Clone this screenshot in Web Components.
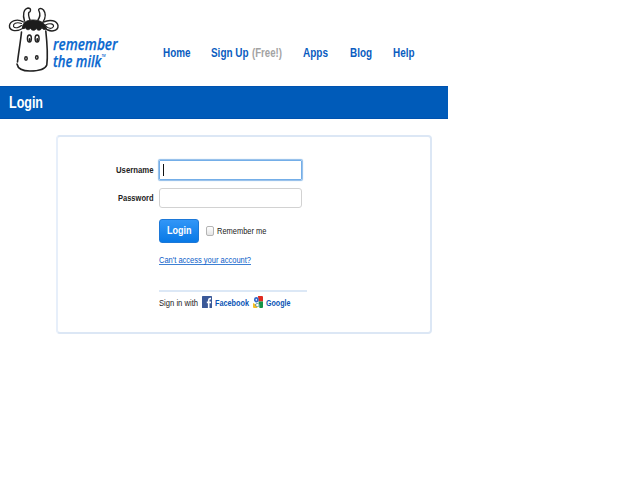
<!DOCTYPE html>
<html lang="en">
<head>
<meta charset="utf-8">
<title>Remember The Milk - Login</title>
<style>
body { margin: 0; background: #fff; font-family: "Liberation Sans", Arial, sans-serif; color: #222; }
</style>
</head>
<body>
<login-page></login-page>
<script>
const define = (name, html, setup) => customElements.define(name, class extends HTMLElement {
  connectedCallback() {
    if (this.shadowRoot) return;
    this.attachShadow({ mode: 'open' }).innerHTML = html;
    if (setup) setup(this, this.shadowRoot);
  }
});

/* One line of text condensed to a set width: w, size, h (line box) and base (baseline). */
define('fit-text', `<style>
  :host { display: block; flex: none; }
  svg { display: block; overflow: visible; }
  text { fill: currentColor; font-family: inherit; font-weight: inherit; font-style: inherit; }
</style><svg><text x="0" lengthAdjust="spacingAndGlyphs"></text></svg>`, (host, root) => {
  const svg = root.querySelector('svg'), t = root.querySelector('text');
  svg.setAttribute('width', host.getAttribute('w'));
  svg.setAttribute('height', host.getAttribute('h'));
  t.setAttribute('y', host.getAttribute('base'));
  t.setAttribute('font-size', host.getAttribute('size'));
  t.setAttribute('textLength', host.getAttribute('w'));
  t.textContent = host.getAttribute('text');
});

define('milk-logo', `<style>
  :host { display: block; width: 124px; height: 80px; }
  svg { display: block; overflow: visible; }
  text { font-family: "Open Sans", "Noto Sans", sans-serif; font-style: italic; font-weight: 600; font-size: 17px; fill: #0a68cf; stroke: #0a68cf; stroke-width: .25px; }
</style>
<svg width="124" height="80" viewBox="0 0 124 80" fill="none" stroke="#222" stroke-width="1.4" stroke-linecap="round" stroke-linejoin="round">
  <path d="M23.500 22C17 18 10 21 9.500 25.500C9 30 15 33 23.500 28"/>
  <path d="M21.500 23.500C16 21.500 13 24 13.500 26.500C15 29 19 27.500 21.500 25.500" stroke-width="1.1"/>
  <path d="M43.500 22C50 19 57 20.500 58 25.500C58.500 31.500 50 33 44 27.500"/>
  <path d="M45.500 25C50 22.500 54 24 53.500 26.500C52 29.500 48 28.500 46 26" stroke-width="1.1"/>
  <path d="M24.500 21C22.500 15 23.500 9 28 8C31.500 8 31 12 28.800 12.500C28 15 28.800 17 30 20"/>
  <path d="M38 20C40 17 40.500 14 39 11C37.500 8.500 41 7.500 43.500 10C46.500 14 45.500 18 43 22"/>
  <path d="M22.500 27.500C22.500 23 26 20 33 20C40 20 45.500 23 46.500 28.500C44.500 30.300 42.500 29.500 42 27.500C41 30.800 37.500 31 36.300 28.500C35 31 31.500 30.800 30.500 28.300C29 30.500 26 30 25.500 27.500C24.500 29 23 29 22.500 27.500Z" fill="#1c1c1c" stroke="#1c1c1c" stroke-width=".9"/>
  <path d="M21.500 32C20.500 42 18.500 53 17.500 62" stroke-width="1.6"/>
  <path d="M17 64C18 69.500 23 71 30 71C38 71 45 70 46.800 65C48 55 47 42 45.800 31" stroke-width="1.6"/>
  <ellipse cx="29.400" cy="38.500" rx="2" ry="3.500"/>
  <ellipse cx="37.100" cy="38.500" rx="2" ry="3.500"/>
  <path d="M29.600 39V40.700M37.300 39V40.700" stroke-width="1.9"/>
  <ellipse cx="26" cy="58.500" rx="1.200" ry="1.700" stroke-width="1.500"/>
  <ellipse cx="36.800" cy="57.500" rx="1.200" ry="1.700" stroke-width="1.500"/>
  <g stroke="none">
    <text x="53" y="49.500" textLength="64.500" lengthAdjust="spacingAndGlyphs">remember</text>
    <text x="53" y="66.500" textLength="48.500" lengthAdjust="spacingAndGlyphs">the milk</text>
    <text x="101.500" y="57" style="font-size:3px;stroke:none">TM</text>
  </g>
</svg>`);

define('site-header', `<style>
  :host { display: flex; height: 86px; width: 448px; color: #0a5cc0; font-weight: bold; }
  nav { display: flex; padding: 44px 0 0 38.500px; height: 18px; gap: 21.400px; }
  .pair { display: flex; gap: 3px; }
  .free { color: #a3a3a3; }
</style>
<milk-logo></milk-logo>
<nav>
  <fit-text w="27.500" h="18" base="12.600" size="12" text="Home"></fit-text>
  <span class="pair"><fit-text w="37.500" h="18" base="12.600" size="12" text="Sign Up"></fit-text><fit-text class="free" w="30" h="18" base="12.600" size="12" text="(Free!)"></fit-text></span>
  <fit-text w="25" h="18" base="12.600" size="12" text="Apps"></fit-text>
  <fit-text w="22" h="18" base="12.600" size="12" text="Blog"></fit-text>
  <fit-text w="21.500" h="18" base="12.600" size="12" text="Help"></fit-text>
</nav>`);

define('title-bar', `<style>
  :host { display: block; box-sizing: border-box; width: 448px; height: 33px; padding-left: 9px; background: #005bb9; border-top: 1px solid #0052ae; border-bottom: 1px solid #0052ae; color: #fff; font-weight: bold; }
</style><fit-text w="34" h="31" base="21" size="16" text="Login"></fit-text>`);

define('text-field', `<style>
  :host { display: grid; grid-template-columns: 95.500px 143px; column-gap: 5.500px; height: 21px; font-weight: bold; }
  fit-text { justify-self: end; }
  .box { box-sizing: border-box; height: 20px; border: 1px solid #d2d2d2; border-radius: 3px; padding: 3px 2.500px; }
  :host([focused]) .box { border-color: #74aee8; border-radius: 1px; box-shadow: 0 0 1px 1px #8fbce9; }
  :host([focused]) .box::before { content: ""; display: block; width: 1.200px; height: 12px; background: #111; }
</style><fit-text></fit-text><div class="box"></div>`, (host, root) => {
  const label = document.createElement('fit-text');
  for (const [k, v] of Object.entries({ w: host.getAttribute('w'), h: 20, base: 12.6, size: 9.5, text: host.getAttribute('label') })) label.setAttribute(k, v);
  root.querySelector('fit-text').replaceWith(label);
});

define('login-button', `<style>
  :host { display: block; box-sizing: border-box; width: 40px; height: 24px; padding-left: 7px; border: 1px solid #1c78d8; border-radius: 3px; background: linear-gradient(#3296f7, #0879e6); color: #fff; font-weight: bold; }
</style><fit-text w="24.500" h="22" base="14.300" size="11.500" text="Login"></fit-text>`);

define('check-option', `<style>
  :host { display: flex; gap: 3px; padding-top: 7px; }
  .box { box-sizing: border-box; width: 7.500px; height: 10px; border: 1px solid #b4b4b4; border-radius: 2px; background: linear-gradient(#fff, #e4e4e4); }
</style><div class="box"></div><fit-text w="49.500" h="12" base="8.300" size="9.500" text="Remember me"></fit-text>`);

define('facebook-icon', `<style>:host, svg { display: block; }</style>
<svg width="10" height="12" viewBox="0 0 10 12"><rect width="10" height="12" rx=".6" fill="#3b5998"/><path d="M9 2.600H8C7 2.600 6.700 3.200 6.700 4.300V12M4.800 6.400H9" fill="none" stroke="#fff" stroke-width="1.600"/></svg>`);

define('google-icon', `<style>:host, svg { display: block; }</style>
<svg width="10" height="12" viewBox="0 0 10 12">
  <rect width="10" height="12" rx="1" fill="#fff"/>
  <path d="M5 0H9Q10 0 10 1V5.500H5.500Z" fill="#e02b20"/><path d="M5.500 5.500H10V11Q10 12 9 12H6.500Z" fill="#159447"/>
  <path d="M0 7L3 8.500L4.500 12H1Q0 12 0 11Z" fill="#f6bd25"/>
  <ellipse cx="3.300" cy="3.700" rx="1.500" ry="1.900" fill="#fff" stroke="#3269c9" stroke-width="1.700"/>
  <ellipse cx="4.400" cy="9" rx="2" ry="1.500" fill="#fff" stroke="#4f8d8a" stroke-width=".8"/>
</svg>`);

define('sign-in-with', `<style>
  :host { display: flex; box-sizing: border-box; width: 148px; border-top: 2px solid #dce8f6; padding-top: 4px; color: #0a55b5; font-weight: bold; }
  .lead { color: #222; font-weight: normal; margin-right: 4px; }
  facebook-icon, google-icon { margin-right: 3px; }
  .fb { margin-right: 3.500px; }
</style>
<fit-text class="lead" w="39" h="14" base="9.600" size="9.500" text="Sign in with"></fit-text>
<facebook-icon></facebook-icon><fit-text class="fb" w="34" h="14" base="9.600" size="9.500" text="Facebook"></fit-text>
<google-icon></google-icon><fit-text w="24.500" h="14" base="9.600" size="9.500" text="Google"></fit-text>`);

define('login-card', `<style>
  :host { display: block; box-sizing: border-box; width: 376px; height: 199px; border: 2px solid #dce7f5; border-left-color: #e7effa; border-radius: 4px; padding-top: 22.500px; }
  .fields { display: grid; row-gap: 7.500px; }
  .rest { padding-left: 101px; }
  .actions { display: flex; gap: 7px; margin-top: 10px; }
  .access { width: 92px; margin-top: 11.500px; color: #0a5cc8; height: 9.500px; border-bottom: 1px solid #3d80d4; }
  sign-in-with { margin-top: 24.500px; }
</style>
<div class="fields"><text-field focused label="Username" w="37.500"></text-field><text-field label="Password" w="35.500"></text-field></div>
<div class="rest">
  <div class="actions"><login-button></login-button><check-option></check-option></div>
  <div class="access"><fit-text w="92" h="9" base="8" size="9.500" text="Can't access your account?"></fit-text></div>
  <sign-in-with></sign-in-with>
</div>`);

define('login-page', `<style>
  :host { display: block; width: 640px; height: 495px; overflow: hidden; background: #fff; }
  login-card { margin: 16px 0 0 56px; }
</style><site-header></site-header><title-bar></title-bar><login-card></login-card>`);
</script>
</body>
</html>
